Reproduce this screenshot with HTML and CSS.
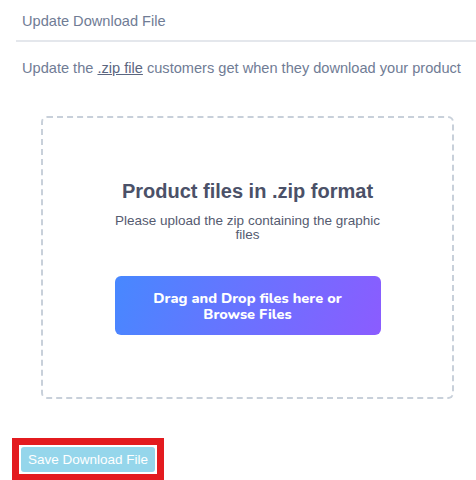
FILE: index.html
```html
<!DOCTYPE html>
<html>
<head>
<meta charset="utf-8">
<link rel="stylesheet" href="styles.css">
</head>
<body>
<div class="page">
  <div class="head">Update Download File</div>
  <p class="intro">Update the <a class="zip-link" href="#">.zip file</a> customers get when they download your product</p>
  <div class="dropzone">
    <h2 class="dz-title">Product files in .zip format</h2>
    <p class="dz-sub">Please upload the zip containing the graphic files</p>
    <div class="dz-btn" role="button">
      <span class="dz-line">Drag and Drop files here or</span>
      <span class="dz-line">Browse Files</span>
    </div>
  </div>
  <div class="save-wrap">
    <button class="save-btn">Save Download File</button>
  </div>
</div>
</body>
</html>
```
FILE: styles.css
```css
html, body {
  margin: 0;
  padding: 0;
  background: #ffffff;
}
body {
  font-family: "Liberation Sans", Arial, sans-serif;
  width: 476px;
  height: 480px;
  overflow: hidden;
}
.page {
  padding-left: 16px;
}
.head {
  padding: 13px 6px 11px;
  font-size: 14.6px;
  line-height: 16px;
  color: #707c95;
  border-bottom: 2px solid #e4e7ec;
}
.intro {
  margin: 18px 0 0;
  padding-left: 6px;
  font-size: 14.6px;
  line-height: 16px;
  color: #707c95;
}
.zip-link {
  color: #5b6680;
  text-decoration: underline;
}
.dropzone {
  margin: 40px 22px 0 25px;
  height: 283px;
  box-sizing: border-box;
  border: 2px dashed #c8d0da;
  border-radius: 6px;
  display: flex;
  flex-direction: column;
  align-items: center;
  padding-top: 62px;
}
.dz-title {
  margin: 0;
  font-size: 20px;
  line-height: 23px;
  font-weight: bold;
  color: #4b5168;
}
.dz-sub {
  margin: 11px 0 0;
  width: 290px;
  text-align: center;
  font-size: 13.5px;
  line-height: 14px;
  color: #555b70;
}
.dz-btn {
  margin-top: 34px;
  width: 266px;
  height: 59px;
  border-radius: 6px;
  background: linear-gradient(110deg, #4788ff 0%, #6a72ff 50%, #8b5cff 100%);
  color: #ffffff;
  font-family: "Nunito", "Lato", sans-serif;
  font-weight: 800;
  font-size: 14.5px;
  line-height: 16px;
  display: flex;
  flex-direction: column;
  align-items: center;
  justify-content: center;
  cursor: pointer;
}
.dz-line {
  display: block;
}
.save-wrap {
  margin: 39px 0 0 -4px;
  display: inline-flex;
  border: 7px solid #e31b1f;
  padding: 2px;
}
.save-btn {
  border: none;
  border-radius: 3px;
  background: #95d6eb;
  color: #ffffff;
  font-family: "Liberation Sans", Arial, sans-serif;
  font-size: 13.5px;
  line-height: 16px;
  height: 25px;
  width: 134px;
  padding: 0;
}
```
